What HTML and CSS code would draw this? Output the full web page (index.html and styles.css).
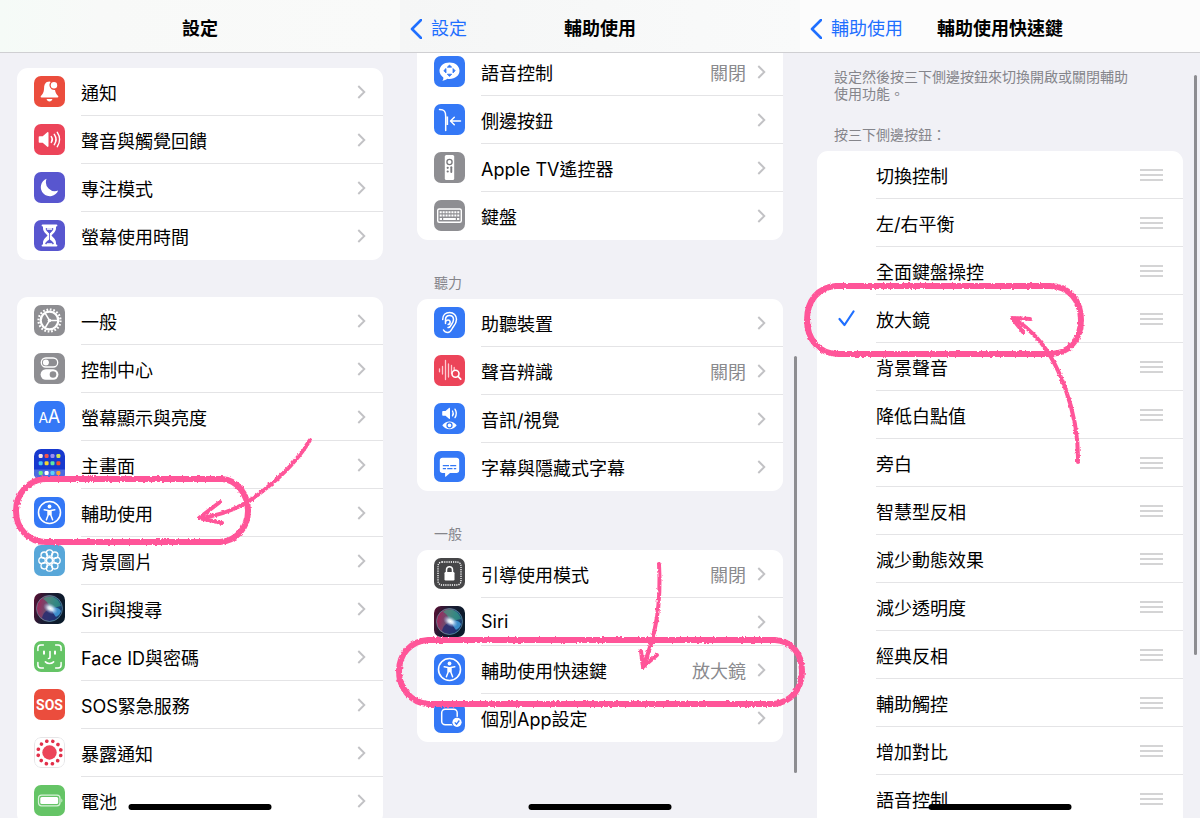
FILE: index.html
```
<!DOCTYPE html>
<html lang="zh-Hant">

<head>
  <meta charset="UTF-8">
  <meta name="viewport" content="width=device-width, initial-scale=1.0">
  <title>輔助使用快速鍵</title>
  <link rel="stylesheet" href="styles.css">
</head>

<body>
  <!-- shared icons -->
  <svg class="sprite" width="0" height="0" aria-hidden="true">
    <defs>
      <linearGradient id="siri-bg" x1="0" y1="0" x2="1" y2="0.3">
        <stop offset="0" stop-color="#5c0f33" />
        <stop offset="0.45" stop-color="#1d1c33" />
        <stop offset="1" stop-color="#0a1a2a" />
      </linearGradient>
      <linearGradient id="siri-orb" x1="0" y1="0.4" x2="1" y2="0.6">
        <stop offset="0" stop-color="#c22c66" />
        <stop offset="0.45" stop-color="#7d6687" />
        <stop offset="0.7" stop-color="#2c6d9c" />
        <stop offset="1" stop-color="#173b78" />
      </linearGradient>
      <radialGradient id="siri-glow">
        <stop offset="0" stop-color="#fff" />
        <stop offset="0.35" stop-color="#e8f4ff" stop-opacity="0.85" />
        <stop offset="1" stop-color="#9ad" stop-opacity="0" />
      </radialGradient>
      <filter id="crayon" x="-5%" y="-5%" width="110%" height="110%">
        <feTurbulence type="fractalNoise" baseFrequency="0.4" numOctaves="2" seed="4" />
        <feDisplacementMap in="SourceGraphic" scale="3" xChannelSelector="R" yChannelSelector="G" />
      </filter>
    </defs>
    <symbol id="chevron" viewBox="0 0 9 14">
      <path d="M1.3 1l6 6-6 6" fill="none" stroke="#c2c2c5" stroke-width="1.9" />
    </symbol>
    <symbol id="back" viewBox="0 0 12 20">
      <path d="M11 1L2 10l9 9" fill="none" stroke="#1f6fff" stroke-width="2.6" stroke-linecap="round" stroke-linejoin="round" />
    </symbol>
    <symbol id="tick" viewBox="0 0 17 17">
      <path d="M1.5 9l5 6L15.5 1.5" fill="none" stroke="#1f6fff" stroke-width="2.2" stroke-linecap="round" stroke-linejoin="round" />
    </symbol>
    <symbol id="grip" viewBox="0 0 23 12">
      <path d="M0 1h23M0 6h23M0 11h23" stroke="#c6c6c8" stroke-width="1.7" />
    </symbol>
    <symbol id="person" viewBox="0 0 31 31">
      <circle cx="15.5" cy="15.5" r="11" fill="none" stroke="#fff" stroke-width="1.6" />
      <circle cx="15.5" cy="9.5" r="1.9" fill="#fff" />
      <path d="M10.2 12.8l4 .8v4.4l-1.800 4.700M20.800 12.800l-4 .8v4.400l1.800 4.700" fill="none" stroke="#fff" stroke-width="1.500" stroke-linecap="round" stroke-linejoin="round" />
      <path d="M13.600 12.900h3.800v5.300h-3.800z" fill="#fff" />
    </symbol>
    <symbol id="siri" viewBox="0 0 31 31">
      <rect width="31" height="31" fill="url(#siri-bg)" />
      <circle cx="15.5" cy="15.5" r="13" fill="url(#siri-orb)" opacity="0.75" />
      <path d="M9 6c5-5 16-2 18 7-5 1-8 2-11 3-1-5-3-8-7-10z" fill="#3ba987" opacity="0.6" />
      <path d="M8 25c1-5 4-8 9-9 4 4 5 6 6 9-4 4-11 4-15 0z" fill="#242b70" opacity="0.8" />
      <path d="M17 16c4-3 8-1 10 2-1 4-4 5-5 6-2-2-3-5-5-8z" fill="#46a5e8" opacity="0.75" />
      <circle cx="15.5" cy="15.5" r="13" fill="none" stroke="#6a9bad" stroke-width="0.8" opacity="0.8" />
      <ellipse cx="16.5" cy="15.5" rx="8" ry="5" fill="url(#siri-glow)" transform="rotate(30 16.5 15.5)" />
    </symbol>
  </svg>

  <main class="screens">
    <section class="screen">
      <header class="bar bar-tint">
        <h1>設定</h1>
      </header>
      <div class="content">
        <nav class="card">
          <a class="row" href="#notifications">
            <svg class="icon red" viewBox="0 0 31 31">
              <path d="M15.5 5.600c-4 0-5.200 3-5.400 6.200-.2 4.400-1 5.800-3 8-.8.900-.6 1.700.5 1.700h15.800c1.100 0 1.300-.8.500-1.700-1.600-1.700-2.500-3-2.900-5.800a4.800 4.800 0 0 1-4.300-7.900c-.4-.3-.8-.5-1.200-.5z" fill="#fff" />
              <path d="M12.600 23h5.800c-.3 1.500-1.400 2.400-2.900 2.400s-2.600-.9-2.900-2.400z" fill="#fff" />
              <circle cx="20" cy="9.300" r="3.200" fill="#fff" />
            </svg>
            <span class="label">通知</span>
            <svg class="chevron"><use href="#chevron" /></svg>
          </a>
          <a class="row" href="#sounds">
            <svg class="icon pink" viewBox="0 0 31 31">
              <path d="M5.5 12.300h3.200l4.600-4c.6-.5 1.200-.2 1.200.6v13.200c0 .8-.6 1.100-1.200.6l-4.600-4H5.500c-.5 0-.8-.3-.8-.8v-4.800c0-.5.3-.8.8-.8z" fill="#fff" />
              <path d="M17.300 12.600a5 5 0 0 1 0 5.800M20.300 10.400a9 9 0 0 1 0 10.200M23.300 8.400a12.500 12.500 0 0 1 0 14.200" fill="none" stroke="#fff" stroke-width="1.5" stroke-linecap="round" />
            </svg>
            <span class="label">聲音與觸覺回饋</span>
            <svg class="chevron"><use href="#chevron" /></svg>
          </a>
          <a class="row" href="#focus">
            <svg class="icon indigo" viewBox="0 0 31 31">
              <path d="M12.600 6.800a9 9 0 1 0 11.600 11.700A9 9 0 0 1 12.600 6.800z" fill="#fff" />
            </svg>
            <span class="label">專注模式</span>
            <svg class="chevron"><use href="#chevron" /></svg>
          </a>
          <a class="row" href="#screen-time">
            <svg class="icon indigo" viewBox="0 0 31 31">
              <path d="M9 5h13v3c0 4-3 5.500-4.500 7.500C19 17.500 22 19 22 23v3H9v-3c0-4 3-5.500 4.500-7.500C12 13.500 9 12 9 8z" fill="#fff" />
              <path d="M12 8.600h7c-.4 2.400-2.300 3.600-3.500 4.900-1.200-1.300-3.100-2.500-3.500-4.900zM15.500 13v7M11.600 24c.5-2.500 2.500-3 3.900-4.400 1.400 1.400 3.400 1.900 3.900 4.400z" fill="#5856cf" stroke="#5856cf" stroke-width="0.8" />
              <path d="M13 9h5M12.800 24h5.400" stroke="#fff" stroke-width="1.4" />
              <path d="M8.600 5.500h13.800M8.600 25.500h13.800" stroke="#fff" stroke-width="2" stroke-linecap="round" />
            </svg>
            <span class="label">螢幕使用時間</span>
            <svg class="chevron"><use href="#chevron" /></svg>
          </a>
        </nav>

        <nav class="card">
          <a class="row" href="#general">
            <svg class="icon gray" viewBox="0 0 31 31">
              <circle cx="15.5" cy="15.5" r="11" fill="none" stroke="#fff" stroke-width="2.2" stroke-dasharray="1.73 1.726" />
              <circle cx="15.5" cy="15.5" r="8.8" fill="none" stroke="#fff" stroke-width="2.2" />
              <path d="M15.5 15.5H24M15.5 15.5l-4.400-7.400M15.5 15.5l-4.400 7.400" stroke="#fff" stroke-width="1.5" />
              <circle cx="15.5" cy="15.5" r="1.8" fill="#fff" />
            </svg>
            <span class="label">一般</span>
            <svg class="chevron"><use href="#chevron" /></svg>
          </a>
          <a class="row" href="#control-center">
            <svg class="icon gray" viewBox="0 0 31 31">
              <rect x="7.3" y="5" width="16.4" height="9" rx="4.5" fill="none" stroke="#fff" stroke-width="1.3" />
              <circle cx="11.9" cy="9.5" r="3" fill="#fff" />
              <rect x="6.6" y="16.3" width="17.8" height="10.4" rx="5.2" fill="#fff" />
              <circle cx="19" cy="21.5" r="3.3" fill="#8e8e92" />
            </svg>
            <span class="label">控制中心</span>
            <svg class="chevron"><use href="#chevron" /></svg>
          </a>
          <a class="row" href="#display">
            <svg class="icon blue" viewBox="0 0 31 31">
              <text class="glyph-text" x="4.5" y="22" font-size="14">A</text>
              <text class="glyph-text" x="13.7" y="22" font-size="18">A</text>
            </svg>
            <span class="label">螢幕顯示與亮度</span>
            <svg class="chevron"><use href="#chevron" /></svg>
          </a>
          <a class="row" href="#home-screen">
            <svg class="icon navy" viewBox="0 0 31 31">
              <rect y="20.5" width="31" height="10.5" fill="#4b6be0" />
              <rect x="4.7" y="5" width="4" height="4" rx="1.2" fill="#f3e6e6" />
              <rect x="10.6" y="5" width="4" height="4" rx="1.2" fill="#f0554e" />
              <rect x="16.5" y="5" width="4" height="4" rx="1.2" fill="#9a8df0" />
              <rect x="22.4" y="5" width="4" height="4" rx="1.2" fill="#cde35a" />
              <rect x="4.7" y="12.3" width="4" height="4" rx="1.2" fill="#4ac5f5" />
              <rect x="10.6" y="12.3" width="4" height="4" rx="1.2" fill="#f7d22f" />
              <rect x="16.5" y="12.3" width="4" height="4" rx="1.2" fill="#62e6a0" />
              <rect x="22.4" y="12.3" width="4" height="4" rx="1.2" fill="#f6502c" />
              <rect x="4.7" y="22" width="4" height="4" rx="1.2" fill="#74ee84" />
              <rect x="10.6" y="22" width="4" height="4" rx="1.2" fill="#fff" />
              <rect x="16.5" y="22" width="4" height="4" rx="1.2" fill="#5ed0f5" />
              <rect x="22.4" y="22" width="4" height="4" rx="1.2" fill="#f7a23b" />
            </svg>
            <span class="label">主畫面</span>
            <svg class="chevron"><use href="#chevron" /></svg>
          </a>
          <a class="row" href="#accessibility">
            <svg class="icon blue"><use href="#person" /></svg>
            <span class="label">輔助使用</span>
            <svg class="chevron"><use href="#chevron" /></svg>
          </a>
          <a class="row" href="#wallpaper">
            <svg class="icon sky" viewBox="0 0 31 31">
              <g fill="none" stroke="#fff" stroke-width="1.3">
                <circle cx="15.5" cy="8" r="3.2" />
                <circle cx="20.8" cy="10.2" r="3.2" />
                <circle cx="23" cy="15.5" r="3.2" />
                <circle cx="20.8" cy="20.8" r="3.2" />
                <circle cx="15.5" cy="23" r="3.2" />
                <circle cx="10.2" cy="20.8" r="3.2" />
                <circle cx="8" cy="15.5" r="3.2" />
                <circle cx="10.2" cy="10.2" r="3.2" />
                <circle cx="15.5" cy="15.5" r="3" />
                <path d="M15.5 11.200v1.300M15.5 18.500v1.300M11.200 15.500h1.300M18.500 15.500h1.300M12.500 12.500l.9.900M18.500 12.500l-.9.900M12.500 18.500l.9-.9M18.500 18.500l-.9-.9" />
              </g>
            </svg>
            <span class="label">背景圖片</span>
            <svg class="chevron"><use href="#chevron" /></svg>
          </a>
          <a class="row" href="#siri-search">
            <svg class="icon"><use href="#siri" /></svg>
            <span class="label">Siri與搜尋</span>
            <svg class="chevron"><use href="#chevron" /></svg>
          </a>
          <a class="row" href="#face-id">
            <svg class="icon green" viewBox="0 0 31 31">
              <g fill="none" stroke="#fff" stroke-linecap="round">
                <path d="M3.900 9.500V7c0-2 1.200-3 3-3h2.500M21.600 4h2.500c2 0 3 1.200 3 3v2.500M27.100 21.500V24c0 2-1.200 3-3 3h-2.500M9.400 27H6.900c-2 0-3-1.200-3-3v-2.500" stroke-width="1.5" />
                <path d="M10 10.500v2.200M21 10.500v2.200" stroke-width="2" />
                <path d="M16 10.500v6c0 .8-.5 1-1.500 1M11.400 20.800c2.300 2.200 5.900 2.200 8.200 0" stroke-width="1.6" />
              </g>
            </svg>
            <span class="label">Face ID與密碼</span>
            <svg class="chevron"><use href="#chevron" /></svg>
          </a>
          <a class="row" href="#sos">
            <svg class="icon red" viewBox="0 0 31 31">
              <text class="glyph-text sos" x="15.5" y="21" font-size="14" text-anchor="middle">SOS</text>
            </svg>
            <span class="label">SOS緊急服務</span>
            <svg class="chevron"><use href="#chevron" /></svg>
          </a>
          <a class="row" href="#exposure">
            <svg class="icon" viewBox="0 0 31 31">
              <rect x="0.5" y="0.5" width="30" height="30" rx="6.5" fill="#fff" stroke="#e6e6e8" />
              <circle cx="15.5" cy="15.5" r="7.2" fill="#ec4459" />
              <circle cx="15.5" cy="15.5" r="11.6" fill="none" stroke="#e2304a" stroke-width="3.6" stroke-linecap="round" stroke-dasharray="0 6.073" transform="rotate(15 15.5 15.5)" />
            </svg>
            <span class="label">暴露通知</span>
            <svg class="chevron"><use href="#chevron" /></svg>
          </a>
          <a class="row" href="#battery">
            <svg class="icon green" viewBox="0 0 31 31">
              <rect x="4.5" y="10.2" width="21.5" height="10.6" rx="3" fill="none" stroke="#d8f2d9" stroke-width="1.2" />
              <rect x="6.3" y="12" width="17.9" height="7" rx="1.5" fill="#fff" />
              <path d="M27.400 13.500c1.300.8 1.300 3.200 0 4z" fill="#d8f2d9" />
            </svg>
            <span class="label">電池</span>
            <svg class="chevron"><use href="#chevron" /></svg>
          </a>
        </nav>
      </div>
      <div class="home-indicator"></div>
    </section>

    <section class="screen">
      <header class="bar bar-cool">
        <a class="back" href="#settings"><svg><use href="#back" /></svg>設定</a>
        <h1>輔助使用</h1>
      </header>
      <div class="content scrolled">
        <nav class="card">
          <a class="row" href="#voice-control">
            <svg class="icon blue" viewBox="0 0 31 31">
              <path d="M15.5 6.500c5.700 0 10 3.500 10 8.200s-4.300 8.200-10 8.200c-.8 0-1.500 0-2.200-.2-1.200 1-3 1.900-5 2 .9-1 1.200-2.200 1-3.300-2.300-1.600-3.800-3.900-3.800-6.700 0-4.700 4.300-8.200 10-8.200z" fill="#fff" />
              <path d="M15.500 9l2.200 2.200h-4.400zM15.500 20.400l2.200-2.200h-4.400zM9.800 14.700l2.200-2.200v4.400zM21.200 14.700L19 12.500v4.400z" fill="#3478f6" stroke="#3478f6" stroke-width="0.8" stroke-linejoin="round" />
            </svg>
            <span class="label">語音控制</span>
            <span class="value">關閉</span>
            <svg class="chevron"><use href="#chevron" /></svg>
          </a>
          <a class="row" href="#side-button">
            <svg class="icon blue" viewBox="0 0 31 31">
              <path d="M5.500 5.500c5 0 6.200 2 6.200 7v14" fill="none" stroke="#fff" stroke-width="1.5" stroke-linecap="round" />
              <path d="M13.300 12.500v8.500" stroke="#fff" stroke-width="1.7" />
              <path d="M26.500 17H16.800M20.300 13.200L16.500 17l3.800 3.800" fill="none" stroke="#fff" stroke-width="1.5" stroke-linecap="round" stroke-linejoin="round" />
            </svg>
            <span class="label">側邊按鈕</span>
            <svg class="chevron"><use href="#chevron" /></svg>
          </a>
          <a class="row" href="#apple-tv">
            <svg class="icon gray" viewBox="0 0 31 31">
              <rect x="10.8" y="3" width="9.4" height="25" rx="1.5" fill="#fff" />
              <circle cx="15.5" cy="10" r="2.6" fill="none" stroke="#77777b" stroke-width="1.3" />
              <circle cx="13.7" cy="15.8" r="1.1" fill="#77777b" />
              <circle cx="13.7" cy="19.5" r="1.1" fill="#77777b" />
              <path d="M17.300 15.300v4.700" stroke="#77777b" stroke-width="1.9" stroke-linecap="round" />
            </svg>
            <span class="label">Apple TV遙控器</span>
            <svg class="chevron"><use href="#chevron" /></svg>
          </a>
          <a class="row" href="#keyboards">
            <svg class="icon gray" viewBox="0 0 31 31">
              <rect x="3.7" y="9" width="23.6" height="13.2" rx="1.5" fill="#8e8e92" stroke="#fff" stroke-width="1.4" />
              <path d="M5.700 12.200h19.600M5.700 15.400h19.600" stroke="#fff" stroke-width="2" stroke-dasharray="2 0.93" />
              <path d="M5.700 18.900H8M9.200 18.900h12.600M23 18.900h2.300" stroke="#fff" stroke-width="2" />
            </svg>
            <span class="label">鍵盤</span>
            <svg class="chevron"><use href="#chevron" /></svg>
          </a>
        </nav>

        <h2>聽力</h2>
        <nav class="card">
          <a class="row" href="#hearing-devices">
            <svg class="icon blue" viewBox="0 0 31 31">
              <g fill="none" stroke="#fff" stroke-width="1.5" stroke-linecap="round">
                <path d="M8.700 12.500c0-4.500 3-7 6.800-7 4.300 0 7 3 7 6.800 0 3-1.200 5-3 7.200-2 2.400-2.400 6-5.700 6-2 0-3.500-1-4.300-2.500" />
                <path d="M11.500 16.500v-3.800c0-2.600 1.600-4.300 4-4.300s4 1.800 4 4.200c0 3-2 4.400-3 6.400-.6 1-1.300 1.700-2.500 1.500" />
                <path d="M11.600 14.500c1-2 4-2 4.500 0 .2 1.500-.6 2.800-2 3" />
              </g>
            </svg>
            <span class="label">助聽裝置</span>
            <svg class="chevron"><use href="#chevron" /></svg>
          </a>
          <a class="row" href="#sound-recognition">
            <svg class="icon pink" viewBox="0 0 31 31">
              <path d="M5.500 13.800v3M8.500 11.500v7.500M11.500 5.500v19M14.500 9v13M17.500 10.500v8M20.200 12.500v2" stroke="#ffc9d0" stroke-width="1.3" stroke-linecap="round" />
              <circle cx="21.5" cy="18.8" r="3.5" fill="#ec4459" stroke="#fff" stroke-width="1.6" />
              <path d="M24.200 21.500l2.500 2.600" stroke="#fff" stroke-width="1.8" stroke-linecap="round" />
            </svg>
            <span class="label">聲音辨識</span>
            <span class="value">關閉</span>
            <svg class="chevron"><use href="#chevron" /></svg>
          </a>
          <a class="row" href="#audio-visual">
            <svg class="icon blue" viewBox="0 0 31 31">
              <path d="M9 8h2.500l3.500-3c.6-.5 1-.2 1 .5v9.800c0 .7-.4 1-1 .5l-3.500-3H9c-.5 0-.8-.3-.8-.8V8.800c0-.5.3-.8.8-.8z" fill="#fff" />
              <path d="M18.500 8a4.500 4.500 0 0 1 0 4.800M21 6.200a8 8 0 0 1 0 8.400" fill="none" stroke="#fff" stroke-width="1.4" stroke-linecap="round" />
              <path d="M8.300 22.300c3.500-5.200 10.900-5.200 14.400 0-3.500 5.200-10.900 5.200-14.400 0z" fill="#fff" />
              <circle cx="15.5" cy="22.3" r="2.5" fill="#fff" stroke="#3478f6" stroke-width="1.3" />
            </svg>
            <span class="label">音訊/視覺</span>
            <svg class="chevron"><use href="#chevron" /></svg>
          </a>
          <a class="row" href="#captions">
            <svg class="icon blue" viewBox="0 0 31 31">
              <path d="M8.500 6.800h14c1.700 0 2.700 1 2.700 2.700v9.800c0 1.700-1 2.700-2.700 2.700h-6.500l-4 3.600c-.5.4-.9.200-.9-.4V22H8.500c-1.700 0-2.700-1-2.700-2.700V9.500c0-1.700 1-2.700 2.700-2.700z" fill="#fff" />
              <path d="M8.800 14.600h6.200M16.200 14.600h6M8.800 17.600h3.200M13.200 17.600h5.300M19.800 17.600h2.400" stroke="#3478f6" stroke-width="1.3" />
            </svg>
            <span class="label">字幕與隱藏式字幕</span>
            <svg class="chevron"><use href="#chevron" /></svg>
          </a>
        </nav>

        <h2>一般</h2>
        <nav class="card">
          <a class="row" href="#guided-access">
            <svg class="icon dark" viewBox="0 0 31 31">
              <rect x="4" y="4" width="23" height="23" rx="4" fill="none" stroke="#fff" stroke-width="1.3" stroke-dasharray="1.2 1" />
              <rect x="10.5" y="14" width="10" height="8.5" rx="1.2" fill="#fff" />
              <path d="M12.500 14.500v-2.700c0-4.200 6-4.200 6 0v2.700" fill="none" stroke="#fff" stroke-width="1.5" />
            </svg>
            <span class="label">引導使用模式</span>
            <span class="value">關閉</span>
            <svg class="chevron"><use href="#chevron" /></svg>
          </a>
          <a class="row" href="#siri-settings">
            <svg class="icon"><use href="#siri" /></svg>
            <span class="label">Siri</span>
            <svg class="chevron"><use href="#chevron" /></svg>
          </a>
          <a class="row" href="#shortcut">
            <svg class="icon blue"><use href="#person" /></svg>
            <span class="label">輔助使用快速鍵</span>
            <span class="value">放大鏡</span>
            <svg class="chevron"><use href="#chevron" /></svg>
          </a>
          <a class="row" href="#per-app">
            <svg class="icon blue" viewBox="0 0 31 31">
              <rect x="7.7" y="7.2" width="15.5" height="15.5" rx="3.5" fill="none" stroke="#fff" stroke-width="1.5" />
              <circle cx="23" cy="20.3" r="5.6" fill="#3478f6" />
              <circle cx="23" cy="20.3" r="4.6" fill="#fff" />
              <path d="M20.800 20.400l1.700 1.800 2.800-3.700" fill="none" stroke="#3478f6" stroke-width="1.3" />
            </svg>
            <span class="label">個別App設定</span>
            <svg class="chevron"><use href="#chevron" /></svg>
          </a>
        </nav>
      </div>
      <div class="scrollbar scrollbar-low"></div>
      <div class="home-indicator"></div>
    </section>

    <section class="screen">
      <header class="bar">
        <a class="back" href="#accessibility"><svg><use href="#back" /></svg>輔助使用</a>
        <h1>輔助使用快速鍵</h1>
      </header>
      <div class="content">
        <p class="hint">設定然後按三下側邊按鈕來切換開啟或關閉輔助使用功能。</p>
        <h2 class="after-hint">按三下側邊按鈕：</h2>
        <div class="card">
          <div class="option">
            <label><input type="checkbox"><svg class="tick"><use href="#tick" /></svg>切換控制</label>
            <button type="button" aria-label="移動切換控制"><svg><use href="#grip" /></svg></button>
          </div>
          <div class="option">
            <label><input type="checkbox"><svg class="tick"><use href="#tick" /></svg>左/右平衡</label>
            <button type="button" aria-label="移動左/右平衡"><svg><use href="#grip" /></svg></button>
          </div>
          <div class="option">
            <label><input type="checkbox"><svg class="tick"><use href="#tick" /></svg>全面鍵盤操控</label>
            <button type="button" aria-label="移動全面鍵盤操控"><svg><use href="#grip" /></svg></button>
          </div>
          <div class="option">
            <label><input type="checkbox" checked><svg class="tick"><use href="#tick" /></svg>放大鏡</label>
            <button type="button" aria-label="移動放大鏡"><svg><use href="#grip" /></svg></button>
          </div>
          <div class="option">
            <label><input type="checkbox"><svg class="tick"><use href="#tick" /></svg>背景聲音</label>
            <button type="button" aria-label="移動背景聲音"><svg><use href="#grip" /></svg></button>
          </div>
          <div class="option">
            <label><input type="checkbox"><svg class="tick"><use href="#tick" /></svg>降低白點值</label>
            <button type="button" aria-label="移動降低白點值"><svg><use href="#grip" /></svg></button>
          </div>
          <div class="option">
            <label><input type="checkbox"><svg class="tick"><use href="#tick" /></svg>旁白</label>
            <button type="button" aria-label="移動旁白"><svg><use href="#grip" /></svg></button>
          </div>
          <div class="option">
            <label><input type="checkbox"><svg class="tick"><use href="#tick" /></svg>智慧型反相</label>
            <button type="button" aria-label="移動智慧型反相"><svg><use href="#grip" /></svg></button>
          </div>
          <div class="option">
            <label><input type="checkbox"><svg class="tick"><use href="#tick" /></svg>減少動態效果</label>
            <button type="button" aria-label="移動減少動態效果"><svg><use href="#grip" /></svg></button>
          </div>
          <div class="option">
            <label><input type="checkbox"><svg class="tick"><use href="#tick" /></svg>減少透明度</label>
            <button type="button" aria-label="移動減少透明度"><svg><use href="#grip" /></svg></button>
          </div>
          <div class="option">
            <label><input type="checkbox"><svg class="tick"><use href="#tick" /></svg>經典反相</label>
            <button type="button" aria-label="移動經典反相"><svg><use href="#grip" /></svg></button>
          </div>
          <div class="option">
            <label><input type="checkbox"><svg class="tick"><use href="#tick" /></svg>輔助觸控</label>
            <button type="button" aria-label="移動輔助觸控"><svg><use href="#grip" /></svg></button>
          </div>
          <div class="option">
            <label><input type="checkbox"><svg class="tick"><use href="#tick" /></svg>增加對比</label>
            <button type="button" aria-label="移動增加對比"><svg><use href="#grip" /></svg></button>
          </div>
          <div class="option">
            <label><input type="checkbox"><svg class="tick"><use href="#tick" /></svg>語音控制</label>
            <button type="button" aria-label="移動語音控制"><svg><use href="#grip" /></svg></button>
          </div>
          <div class="option">
            <label><input type="checkbox"><svg class="tick"><use href="#tick" /></svg></label>
          </div>
        </div>
      </div>
      <div class="scrollbar scrollbar-top"></div>
      <div class="home-indicator"></div>
    </section>

    <!-- hand drawn circles and arrows -->
    <svg class="marks" viewBox="0 0 1200 818" preserveAspectRatio="xMidYMin meet" aria-hidden="true">
      <g filter="url(#crayon)">
        <g class="ring">
          <path d="M45 479H222C237 480 248 494 248 511S236 541 220 542H46C28 542 16 528 16 511S28 480 45 479z" />
          <path d="M428 640H775C792 641 802 654 802 671S792 702 774 704H428C411 703 399 688 399 671S411 641 428 640z" />
          <path d="M836 286H1050C1069 286 1081 301 1081 320S1069 354 1050 354H838C819 354 807 339 807 320S818 287 836 286z" />
        </g>
        <g class="arrow">
          <path d="M310 440C298 460 282 476 264 490C246 505 226 515 200 518" />
          <path d="M220 502L199 518L222 523" />
          <path d="M659 564C661 597 658 632 643 666" />
          <path d="M641 651L643 667L657 655" />
          <path d="M1078 462C1079 412 1058 358 1033 334C1027 328 1021 322 1013 319" />
          <path d="M1030 319L1012 318L1023 332" />
        </g>
      </g>
    </svg>
  </main>
</body>

</html>
```
FILE: styles.css
```
* {
  box-sizing: border-box;
}

body {
  margin: 0;
  background-color: #f1f1f6;
  color: #000;
  font-family: Inter, "Noto Sans CJK TC", sans-serif;
  font-size: 18px;
}

a {
  color: inherit;
  text-decoration: none;
}

.sprite {
  position: absolute;
}

.screens {
  position: relative;
  display: grid;
  grid-template-columns: repeat(3, 1fr);
  height: 100vh;
  overflow: hidden;
}

.screen {
  position: relative;
  min-width: 0;
  overflow: hidden;
}

/* top bar */
.bar {
  position: relative;
  z-index: 1;
  display: grid;
  grid-template-columns: 1fr auto 1fr;
  align-items: center;
  height: 53px;
  padding: 6px 10px 0;
  background-color: #fcfcfc;
  border-bottom: 1px solid #cfcfd2;
}

.bar-tint {
  background-image: linear-gradient(to right, #f5fbf7, #f8f9f8 25%, #f9faf9);
}

.bar-cool {
  background-image: linear-gradient(to right, #f5f6f6, #f9fafa);
}

.bar h1 {
  grid-column: 2;
  margin: 0;
  font-size: 18px;
  font-weight: 600;
  line-height: 24px;
}

.back {
  display: flex;
  align-items: center;
  gap: 9px;
  color: #1f6fff;
  line-height: 24px;
}

.back svg {
  width: 12px;
  height: 20px;
}

/* lists */
.content {
  padding: 15px 17px;
}

.content.scrolled {
  margin-top: -5px;
  padding-top: 0;
}

.card {
  background-color: #fff;
  border-radius: 11px;
}

.card + .card {
  margin-top: 37px;
}

.scrolled .card:first-child {
  border-top-left-radius: 0;
  border-top-right-radius: 0;
}

h2,
.hint {
  margin: 0;
  padding: 0 17px;
  color: #85858b;
  font-size: 14px;
  font-weight: 400;
  line-height: 17px;
}

h2 {
  margin: 34px 0 8px;
}

.hint {
  padding-right: 51px;
}

h2.after-hint {
  margin-top: 24px;
}

.row,
.option {
  position: relative;
  display: flex;
  align-items: center;
  height: 48px;
  padding: 0 17px 1px;
}

.row::after,
.option::after {
  content: "";
  position: absolute;
  right: 0;
  bottom: 0;
  left: 64px;
  border-bottom: 1px solid #e4e4e6;
}

.option::after {
  left: 59px;
}

.row:last-child::after,
.option:last-child::after {
  display: none;
}

.icon {
  flex: none;
  width: 31px;
  height: 31px;
  margin-right: 16px;
  border-radius: 7px;
}

.red { background-color: #eb4d3d; }
.pink { background-color: #ec4459; }
.indigo { background-color: #5856cf; }
.gray { background-color: #8e8e92; }
.blue { background-color: #3478f6; }
.navy { background-color: #1739cf; }
.sky { background-color: #58a7d9; }
.green { background-color: #65c466; }
.dark { background-color: #464648; }

.glyph-text {
  fill: #fff;
  font-family: Inter, sans-serif;
  font-weight: 400;
}

.glyph-text.sos {
  font-family: Roboto, sans-serif;
  font-weight: 700;
}

.label {
  flex: 1;
}

.value {
  margin-right: 11px;
  color: #8a8a8e;
}

.chevron {
  flex: none;
  width: 9px;
  height: 14px;
}

/* reorderable options */
.option label {
  display: flex;
  flex: 1;
  align-items: center;
  height: 100%;
}

.option input {
  width: 0;
  height: 0;
  margin: 0;
  appearance: none;
}

.tick {
  width: 17px;
  height: 17px;
  margin: 0 21px 0 4px;
  visibility: hidden;
}

.option input:checked + .tick {
  visibility: visible;
}

.option button {
  display: flex;
  margin-right: 3px;
  padding: 0;
  border: 0;
  background: none;
}

.option button svg {
  width: 23px;
  height: 12px;
}

/* things lying over the screens */
.scrollbar {
  position: absolute;
  right: 3px;
  width: 3px;
  border-radius: 2px;
  background-color: #8d8d91;
}

.scrollbar-low {
  top: 356px;
  height: 417px;
}

.scrollbar-top {
  top: 75px;
  height: 580px;
}

.home-indicator {
  position: absolute;
  bottom: 8px;
  left: 50%;
  width: 143px;
  height: 6px;
  border-radius: 3px;
  background-color: #000;
  transform: translateX(-50%);
}

.marks {
  position: absolute;
  top: 0;
  left: 0;
  width: 100%;
  pointer-events: none;
}

.ring,
.arrow {
  fill: none;
  stroke: #ff5599;
  stroke-linecap: round;
  stroke-linejoin: round;
}

.ring {
  stroke-width: 6;
}

.arrow {
  stroke-width: 4;
}
```
